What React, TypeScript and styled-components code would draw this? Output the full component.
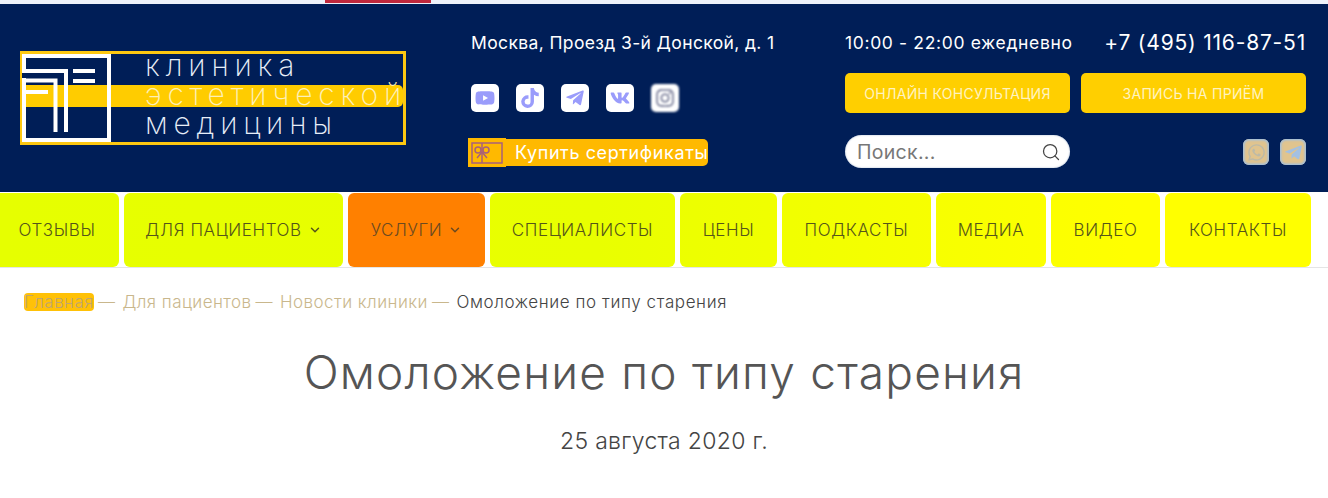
import React from 'react';
import styled, { createGlobalStyle, css } from 'styled-components';
import { Search, ChevronDown } from 'lucide-react';
import { FaYoutube, FaTelegramPlane, FaVk, FaInstagram, FaWhatsapp } from 'react-icons/fa';
import { FaTiktok } from 'react-icons/fa6';

const GlobalStyle = createGlobalStyle`
  html, body { margin: 0; padding: 0; background: #fff; }
  body { font-family: 'Inter', 'Noto Sans', sans-serif; color: #555; overflow: hidden; }
  * { box-sizing: border-box; }
  a { color: inherit; text-decoration: none; }
`;

const TopStrip = styled.div`
  height: 4px;
  background: #eef2fa;
  padding-left: 325px;
`;

const RedLine = styled.div`
  width: 106px;
  height: 3px;
  background: #c0283c;
`;

const Header = styled.header`
  height: 188px;
  background: #001e57;
  display: grid;
  grid-template-columns: 386px 439px 1fr;
  padding: 47px 22px 0 20px;
  color: #fff;
`;

const Logo = styled.div`
  position: relative;
  width: 386px;
  height: 94px;
  border: 3px solid #fdc811;
  display: flex;
`;

const LogoBand = styled.div`
  position: absolute;
  left: 0;
  right: 0;
  top: 31px;
  height: 22px;
  background: #ffcc00;
  border-radius: 0 5px 5px 0;
`;

const LogoMark = styled.svg`
  position: relative;
  width: 90px;
  height: 88px;
  flex: none;
  overflow: visible;
`;

const LogoText = styled.div`
  position: relative;
  margin: -3px 0 0 32px;
  display: flex;
  flex-direction: column;
  font-size: 30px;
  font-weight: 200;
  line-height: 29px;
  letter-spacing: 5.8px;
  white-space: nowrap;
`;

const LogoLine = styled.span<{ $onBand?: boolean }>`
  color: ${p => (p.$onBand ? '#fdf0b8' : '#e8eef8')};
`;

const MiddleColumn = styled.div`
  padding-left: 65px;
  display: flex;
  flex-direction: column;
  align-items: flex-start;
`;

const Address = styled.div`
  font-size: 17.5px;
  letter-spacing: 0.37px;
  line-height: 22px;
  margin-top: -19px;
  white-space: nowrap;
`;

const Socials = styled.div`
  display: flex;
  gap: 17px;
  margin-top: 30px;
`;

const SocialIcon = styled.a<{ $blur?: boolean }>`
  width: 28px;
  height: 28px;
  border-radius: 5px;
  background: #fff;
  color: #9a9cfb;
  display: flex;
  align-items: center;
  justify-content: center;
  font-size: 20px;
  ${p =>
    p.$blur &&
    css`
      filter: blur(1px);
      color: #6f7390;
    `}
`;

const CertButton = styled.a`
  display: flex;
  align-items: center;
  height: 27px;
  width: 240px;
  margin-top: 27px;
  margin-left: -3px;
  background: #ffb900;
  border-radius: 0 5px 5px 0;
  font-size: 18px;
  letter-spacing: 0.6px;
  white-space: nowrap;
`;

const CertIcon = styled.span`
  width: 38px;
  height: 29px;
  background: #ffb900;
  display: flex;
  align-items: center;
  justify-content: center;
  flex: none;
  margin-right: 9px;
`;

const RightColumn = styled.div`
  display: grid;
  grid-template-columns: 225px 225px;
  column-gap: 11px;
  align-content: start;
`;

const Hours = styled.div`
  font-size: 17.5px;
  letter-spacing: 0.65px;
  line-height: 22px;
  margin-top: -19px;
  white-space: nowrap;
`;

const Phone = styled.a`
  font-size: 21px;
  letter-spacing: 0.8px;
  line-height: 22px;
  margin-top: -19px;
  text-align: right;
  white-space: nowrap;
`;

const ActionButton = styled.a`
  height: 40px;
  margin-top: 19px;
  background: #ffcf00;
  border-radius: 5px;
  display: flex;
  align-items: center;
  justify-content: center;
  font-size: 14px;
  letter-spacing: 0.3px;
  white-space: nowrap;
  color: #fff3c0;
`;

const SearchBox = styled.div`
  height: 33px;
  margin-top: 22px;
  background: #fff;
  border-radius: 17px;
  box-shadow: inset 0 0 2px #9fb2cc;
  display: flex;
  align-items: center;
  justify-content: space-between;
  padding: 0 9px 0 12px;
  font-size: 19.5px;
  letter-spacing: 0.3px;
  color: #777;
`;

const Messengers = styled.div`
  display: flex;
  justify-content: flex-end;
  gap: 11px;
  margin-top: 26px;
`;

const MessengerIcon = styled.a<{ $color: string }>`
  width: 26px;
  height: 26px;
  border-radius: 6px;
  background: #e0c48e;
  box-shadow: inset 0 0 2px 1.5px #a3bfdc;
  color: ${p => p.$color};
  display: flex;
  align-items: center;
  justify-content: center;
  font-size: 19px;
`;

const Nav = styled.nav`
  height: 76px;
  display: flex;
  gap: 5px;
  padding-top: 1px;
  margin-left: -5px;
  border-bottom: 1px solid #e5e5e5;
  width: 1333px;
`;

const NavItem = styled.a<{ $width: number; $active?: boolean }>`
  width: ${p => p.$width}px;
  flex: none;
  display: flex;
  align-items: center;
  justify-content: center;
  gap: 6px;
  border-radius: 6px;
  font-size: 17px;
  font-weight: 300;
  letter-spacing: 0.6px;
  color: #55551a;
  white-space: nowrap;
  background: linear-gradient(90deg, #e6ff00, #e9ff00 45%, #ffff00 85%) fixed;
  ${p =>
    p.$active &&
    css`
      background: #ff8000;
      color: #6b4a20;
    `}
`;

const Breadcrumbs = styled.div`
  display: flex;
  align-items: center;
  padding: 23px 0 0 24px;
  font-size: 17px;
  font-weight: 300;
  letter-spacing: 0.45px;
  line-height: 22px;
  color: #c9b78c;
  white-space: nowrap;
`;

const Crumb = styled.a<{ $highlight?: boolean }>`
  ${p =>
    p.$highlight &&
    css`
      background: #ffc107;
      color: #bfa670;
      border-radius: 4px;
      height: 18px;
      line-height: 18px;
    `}
`;

const Separator = styled.span`
  margin: 0 7px 0 4px;
`;

const CurrentCrumb = styled.span`
  color: #444;
  letter-spacing: 0.6px;
`;

const Title = styled.h1`
  margin: 31px 0 0;
  text-align: center;
  font-size: 46px;
  letter-spacing: 1.2px;
  line-height: 56px;
  font-weight: 300;
  color: #555;
`;

const DateLine = styled.div`
  margin-top: 27px;
  text-align: center;
  font-size: 23px;
  font-weight: 300;
  letter-spacing: 0.3px;
  line-height: 28px;
  color: #444;
`;

const navItems = [
  { label: 'ОТЗЫВЫ', width: 124 },
  { label: 'ДЛЯ ПАЦИЕНТОВ', width: 219, arrow: true },
  { label: 'УСЛУГИ', width: 137, arrow: true, active: true },
  { label: 'СПЕЦИАЛИСТЫ', width: 185 },
  { label: 'ЦЕНЫ', width: 97 },
  { label: 'ПОДКАСТЫ', width: 149 },
  { label: 'МЕДИА', width: 110 },
  { label: 'ВИДЕО', width: 109 },
  { label: 'КОНТАКТЫ', width: 146 },
];

const App = () => (
  <>
    <GlobalStyle />
    <TopStrip>
      <RedLine />
    </TopStrip>
    <Header>
      <Logo>
        <LogoBand />
        <LogoMark viewBox="0 0 90 88" fill="none" stroke="#fff" strokeWidth="4">
          <rect x="1" y="2" width="85" height="84" />
          <path d="M-1 21.5H40" stroke="#001e57" strokeWidth="5" />
          <path d="M-1 17H43V78M-1 26.5H32.5V78" />
          <path d="M50 17H72M50 27H72M0 38H25" />
        </LogoMark>
        <LogoText>
          <LogoLine>клиника</LogoLine>
          <LogoLine $onBand>эстетической</LogoLine>
          <LogoLine>медицины</LogoLine>
        </LogoText>
      </Logo>
      <MiddleColumn>
        <Address>Москва, Проезд 3-й Донской, д. 1</Address>
        <Socials>
          <SocialIcon><FaYoutube /></SocialIcon>
          <SocialIcon><FaTiktok /></SocialIcon>
          <SocialIcon><FaTelegramPlane /></SocialIcon>
          <SocialIcon><FaVk /></SocialIcon>
          <SocialIcon $blur><FaInstagram /></SocialIcon>
        </Socials>
        <CertButton>
          <CertIcon>
            <svg width="32" height="22" viewBox="0 0 32 22" fill="none" stroke="#a8607a" strokeWidth="1.5">
              <rect x="1" y="1" width="30" height="20" />
              <path d="M11 1V21" />
              <circle cx="7" cy="8" r="3" />
              <circle cx="15" cy="8" r="3" />
              <path d="M11 10L6 16M11 10L16 16" />
            </svg>
          </CertIcon>
          Купить сертификаты
        </CertButton>
      </MiddleColumn>
      <RightColumn>
        <Hours>10:00 - 22:00 ежедневно</Hours>
        <Phone>+7 (495) 116-87-51</Phone>
        <ActionButton>ОНЛАЙН КОНСУЛЬТАЦИЯ</ActionButton>
        <ActionButton>ЗАПИСЬ НА ПРИЁМ</ActionButton>
        <SearchBox>
          Поиск...
          <Search size={20} color="#444" strokeWidth={1.5} />
        </SearchBox>
        <Messengers>
          <MessengerIcon $color="#bcbaa8"><FaWhatsapp /></MessengerIcon>
          <MessengerIcon $color="#a3c0e2"><FaTelegramPlane /></MessengerIcon>
        </Messengers>
      </RightColumn>
    </Header>
    <Nav>
      {navItems.map(item => (
        <NavItem key={item.label} $width={item.width} $active={item.active}>
          {item.label}
          {item.arrow && <ChevronDown size={14} strokeWidth={2.5} />}
        </NavItem>
      ))}
    </Nav>
    <Breadcrumbs>
      <Crumb $highlight>Главная</Crumb>
      <Separator>—</Separator>
      <Crumb>Для пациентов</Crumb>
      <Separator>—</Separator>
      <Crumb>Новости клиники</Crumb>
      <Separator>—</Separator>
      <CurrentCrumb>Омоложение по типу старения</CurrentCrumb>
    </Breadcrumbs>
    <Title>Омоложение по типу старения</Title>
    <DateLine>25 августа 2020 г.</DateLine>
  </>
);

export default App;
